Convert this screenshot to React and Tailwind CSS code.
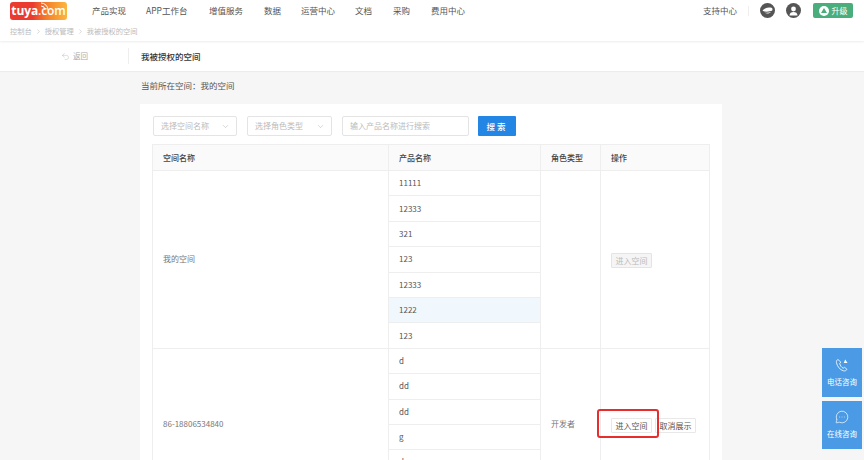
import { MessageCircleMore, ChevronDown, ChevronRight, Undo2 } from "lucide-react";

const NAV = [
  ["产品实现", "w-[54px]"],
  ["APP工作台", "w-[63px]"],
  ["增值服务", "w-[55px]"],
  ["数据", "w-[37px]"],
  ["运营中心", "w-[54px]"],
  ["文档", "w-[38px]"],
  ["采购", "w-[38px]"],
  ["费用中心", "w-[40px]"],
];

const GROUPS = [
  {
    name: "我的空间",
    role: "",
    disabled: true,
    products: ["11111", "12333", "321", "123", "12333", "1222", "123"],
  },
  {
    name: "86-18806534840",
    role: "开发者",
    products: ["d", "dd", "dd", "g", "d", "d"],
  },
];

function Logo() {
  return (
    <div className="relative w-[57px] h-[18px] rounded-[3px] bg-gradient-to-r from-[#ea3b2e] from-40% via-[#f58a2c] via-70% to-[#fbb63f] flex items-center justify-center">
      <span className="text-white text-[12px] leading-none tracking-[-0.1px] font-['Open_Sans',sans-serif]">
        <span className="font-bold">tuya</span>
        <span className="font-semibold">.com</span>
      </span>
      <svg className="absolute left-[30px] top-[0px]" width="10" height="8" viewBox="0 0 10 8" fill="none" stroke="#fff" strokeWidth="1">
        <path d="M1 4a4 4 0 0 1 4 4M1 1a7 7 0 0 1 7 7" />
      </svg>
    </div>
  );
}

function TopBar() {
  return (
    <div className="h-[21px] flex items-center bg-white">
      <div className="ml-[10px] mr-[25px] mt-[1px]">
        <Logo />
      </div>
      <nav className="flex text-[8.5px] text-[#555]">
        {NAV.map(([label, width]) => (
          <span key={label} className={`${width} whitespace-nowrap`}>{label}</span>
        ))}
      </nav>
      <div className="ml-auto flex items-center">
        <span className="text-[8.5px] text-[#555] mr-[11px]">支持中心</span>
        <div className="w-px h-[10px] bg-[#eee] mr-[11px]" />
        <div className="w-[15px] h-[15px] rounded-full bg-[#555] mr-[11px] flex items-center justify-center">
          <svg width="11" height="7" viewBox="0 0 11 7" fill="#fff">
            <path d="M0.500 3.800C2 1.200 6 -0.200 10 1 10.800 2 10.500 3 10 3.800 7 4.800 3 5 0.500 3.800z" />
            <path d="M2.500 5.500C4.500 6 7 5.800 9 4.800 7.500 6.800 4.500 7.200 2.500 5.500z" />
          </svg>
        </div>
        <div className="w-[15px] h-[15px] rounded-full bg-[#555] mr-[12px] flex items-center justify-center">
          <svg width="9" height="10" viewBox="0 0 9 10" fill="#fff">
            <circle cx="4.5" cy="3" r="2.4" />
            <path d="M0.5 9.5c0-2.5 1.8-3.6 4-3.6s4 1.1 4 3.6z" />
          </svg>
        </div>
        <div className="w-[40px] h-[15px] mr-[11px] rounded-[2px] bg-[#4aae7c] flex items-center justify-center gap-[3px]">
          <div className="w-[10px] h-[10px] rounded-full bg-white flex items-center justify-center">
            <div className="w-0 h-0 border-x-[3px] border-x-transparent border-b-[5px] border-b-[#4aae7c]" />
          </div>
          <span className="text-[8px] text-white">升级</span>
        </div>
      </div>
    </div>
  );
}

function Select({ label, width }) {
  return (
    <div className={`${width} h-[20px] mr-[10px] border border-[#e4e4e4] rounded-[2px] flex items-center justify-between pl-[7px] pr-[6px] text-[8px] text-[#bbb]`}>
      <span>{label}</span>
      <ChevronDown size={9} strokeWidth={1} className="text-[#999]" />
    </div>
  );
}

function Btn({ disabled, children }) {
  return (
    <span
      className={`inline-flex h-[15px] w-[41px] items-center justify-center border rounded-[1px] text-[8px] whitespace-nowrap ${
        disabled ? "bg-[#f5f5f5] border-[#e4e4e4] text-[#bbb]" : "bg-white border-[#e8e8e8] text-[#555]"
      }`}
    >
      {children}
    </span>
  );
}

function Table() {
  return (
    <table className="w-[557px] -ml-px table-fixed border-collapse text-[8px] text-[#666]">
      <colgroup>
        <col className="w-[236px]" />
        <col className="w-[152px]" />
        <col className="w-[60px]" />
        <col className="w-[109px]" />
      </colgroup>
      <thead>
        <tr className="h-[26px] bg-[#fafafa] text-[#444] text-left">
          {["空间名称", "产品名称", "角色类型", "操作"].map((h) => (
            <th key={h} className="border border-[#eee] pl-[10px] font-medium">{h}</th>
          ))}
        </tr>
      </thead>
      <tbody>
        {GROUPS.map((g) =>
          g.products.map((p, i) => (
            <tr key={g.name + i} className="h-[25.4px]">
              {i === 0 && (
                <td rowSpan={g.products.length} className="border border-[#eee] pl-[10px] text-[#777]">
                  {g.name}
                </td>
              )}
              <td className={`border border-[#eee] pl-[10px] text-[#555] ${g.disabled && i === 5 ? "bg-[#f0f8fd]" : ""}`}>{p}</td>
              {i === 0 && (
                <td rowSpan={g.products.length} className="border border-[#eee] pl-[10px] text-[#777]">
                  {g.role}
                </td>
              )}
              {i === 0 && (
                <td rowSpan={g.products.length} className="border border-[#eee] pl-[10px]">
                  <div className="flex gap-[3px] pt-[3px]">
                    {g.disabled ? (
                      <Btn disabled>进入空间</Btn>
                    ) : (
                      <>
                        <Btn>进入空间</Btn>
                        <Btn>取消展示</Btn>
                      </>
                    )}
                  </div>
                </td>
              )}
            </tr>
          ))
        )}
      </tbody>
    </table>
  );
}

export default function App() {
  return (
    <div className="relative w-[864px] h-[460px] overflow-hidden bg-[#f6f6f6] font-['Noto_Sans_CJK_SC','Liberation_Sans',sans-serif]">
      <div className="bg-white shadow-[0_1px_2px_rgba(0,0,0,0.08)] relative">
        <TopBar />
        <div className="h-[20px] pl-[10px] flex items-center gap-[2px] text-[7.25px] text-[#bbb]">
          <span>控制台</span>
          <ChevronRight size={7} className="mx-[1px]" />
          <span>授权管理</span>
          <ChevronRight size={7} className="mx-[1px]" />
          <span>我被授权的空间</span>
        </div>
      </div>

      <div className="h-[30px] bg-white flex items-center shadow-[0_1px_1px_rgba(0,0,0,0.04)]">
        <div className="w-[129px] h-[16px] pl-[61px] flex items-center gap-[3px] border-r border-[#eee] text-[7.5px] text-[#aaa]">
          <Undo2 size={9} strokeWidth={1} />
          <span>返回</span>
        </div>
        <span className="ml-[12px] text-[8.5px] font-medium text-[#333]">我被授权的空间</span>
      </div>

      <div className="pl-[141px] pt-[8px] h-[33px] text-[8.5px] text-[#555]">当前所在空间：我的空间</div>

      <div className="ml-[140px] w-[582px] h-[400px] bg-white pt-[12px] pl-[13px]">
        <div className="flex items-center mb-[8px]">
          <Select label="选择空间名称" width="w-[84px]" />
          <Select label="选择角色类型" width="w-[85px]" />
          <div className="w-[127px] h-[20px] mr-[9px] border border-[#e4e4e4] rounded-[2px] flex items-center pl-[7px] text-[8px] text-[#bbb]">
            输入产品名称进行搜索
          </div>
          <button className="w-[38px] h-[20px] rounded-[1px] bg-[#2486e4] text-white text-[8.5px] font-medium tracking-[2px]">
            搜索
          </button>
        </div>
        <Table />
      </div>

      {/* annotation drawn on the screenshot */}
      <div className="absolute left-[597px] top-[409px] w-[62px] h-[29px] border-2 border-[#e62e2e] rounded-[3px]" />

      <div className="absolute right-[2px] top-[348px] w-[40px] flex flex-col gap-[4px]">
        <div className="h-[49px] bg-[#4a9ae5] flex flex-col items-center justify-center gap-[4px] text-white text-[7.5px]">
          <svg width="14" height="14" viewBox="0 0 24 24" fill="none" stroke="#fff" strokeWidth="1.4">
            <path d="M5 2.5c-2 1-3 3-2.5 5.5 1 6 6 12.500 12 14 2.500.6 5-.5 6-2.500l-4-3.500-2.500 1.500c-3-1.500-5-4.500-6-8l2-2.500z" />
            <path d="M15 8.500l2.500-6 4 6z" fill="#fff" stroke="none" />
          </svg>
          <span>电话咨询</span>
        </div>
        <div className="h-[48px] bg-[#4a9ae5] flex flex-col items-center justify-center gap-[4px] text-white text-[7.5px]">
          <MessageCircleMore size={14} strokeWidth={1.2} />
          <span>在线咨询</span>
        </div>
      </div>
    </div>
  );
}
